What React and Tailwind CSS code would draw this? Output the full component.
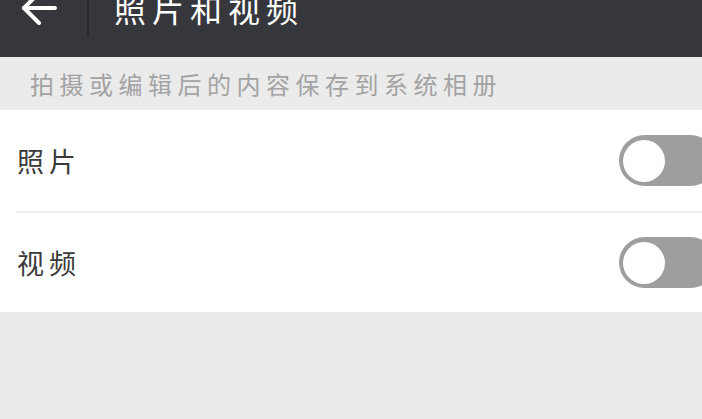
const CJK = { fontFamily: '"Noto Sans CJK SC", "Noto Sans", sans-serif' };

function Toggle() {
  return (
    <div className="ml-auto mr-[-14px] flex h-[51px] w-[97px] shrink-0 items-center rounded-full bg-[#9e9e9e] pl-[4px]">
      <div className="h-[42px] w-[42px] rounded-full bg-white" />
    </div>
  );
}

function SettingRow({ label, height }) {
  return (
    <div className={`flex items-center pl-[17px] ${height}`}>
      <span className="text-[27px] leading-none tracking-[5px] text-[#3a3a3a]">{label}</span>
      <Toggle />
    </div>
  );
}

export default function App() {
  return (
    <div className="h-[419px] w-full overflow-hidden bg-[#ebebeb]" style={CJK}>
      <header className="h-[57px] overflow-hidden bg-[#36373c]">
        <div className="mt-[-22px] flex h-[59px] items-center">
          <svg className="ml-[21px] h-[36px] w-[36px]" viewBox="0 0 36 36" fill="none" stroke="white" strokeWidth="4" strokeLinecap="round" strokeLinejoin="round">
            <path d="M34 18H3" />
            <path d="M18 3L3 18l15 15" />
          </svg>
          <div className="ml-[30px] w-[2px] self-stretch bg-[#2b2c30]" />
          <h1 className="ml-[25px] text-[32px] leading-none tracking-[6px] text-white">照片和视频</h1>
        </div>
      </header>
      <div className="flex h-[53px] items-center pl-[30px]">
        <p className="text-[24px] leading-none tracking-[5.5px] text-[#a3a3a3]">拍摄或编辑后的内容保存到系统相册</p>
      </div>
      <div className="bg-white">
        <SettingRow label="照片" height="h-[101px]" />
        <div className="ml-[16px] h-[2px] bg-[#ececec]" />
        <SettingRow label="视频" height="h-[99px]" />
      </div>
    </div>
  );
}
